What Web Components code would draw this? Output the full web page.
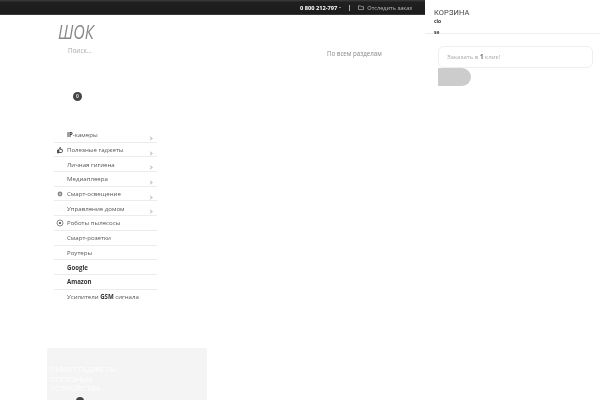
<!doctype html>
<html>
<head>
<meta charset="utf-8">
<style>
  html,body{margin:0;height:400px;overflow:hidden;background:#fff;font-family:"Open Sans",sans-serif;color:#444;}
  body{display:flex;}
  /* own layers with no background: keeps the text antialiasing grey like the reference */
  #page{display:flex;flex-direction:column;width:425px;height:400px;flex:none;will-change:transform;}
</style>
</head>
<body>
<div id="page">
  <top-bar></top-bar>
  <site-header></site-header>
  <side-menu>
    <menu-row arrow><b>IP</b>-камеры</menu-row>
    <menu-row arrow icon="thumb">Полезные гаджеты</menu-row>
    <menu-row arrow>Личная гигиена</menu-row>
    <menu-row arrow>Медиаплеера</menu-row>
    <menu-row arrow icon="gear">Смарт-освещение</menu-row>
    <menu-row arrow>Управление домом</menu-row>
    <menu-row icon="robot">Роботы пылесосы</menu-row>
    <menu-row>Смарт-розетки</menu-row>
    <menu-row>Роутеры</menu-row>
    <menu-row><b>Google</b></menu-row>
    <menu-row><b>Amazon</b></menu-row>
    <menu-row last>Усилители <b>GSM</b> сигнала</menu-row>
  </side-menu>
  <promo-card>СМАРТ-ГАДЖЕТЫ<br>ПОЛЕЗНЫЕ<br>УСТРОЙСТВА</promo-card>
</div>
<cart-panel></cart-panel>

<script>
function shadow(el, html){
  el.attachShadow({mode:'open'}).innerHTML = html;
}

class TopBar extends HTMLElement {
  connectedCallback(){
    shadow(this, `<style>
      :host{display:flex;justify-content:flex-end;align-items:center;box-sizing:border-box;height:15px;
        background:linear-gradient(#3a3a3a 0,#333 1px,#202020 2px,#1c1c1c 14px,#555 15px);color:#bbb;font-size:5.600px;padding-right:13px;flex:none;}
      b{color:#fff;font-weight:700;font-size:5.700px;}
      .caret{width:0;height:0;border:1.500px solid transparent;border-top-color:#ddd;border-bottom:0;margin-left:2px;}
      .sep{width:1px;height:6px;background:#aaa;margin:0 8px 0 8px;}
      svg{margin-right:3px;}
    </style>
    <b>0 800 212-797</b><span class="caret"></span><span class="sep"></span>
    <svg width="6" height="5" viewBox="0 0 7 6" fill="none" stroke="#bbb" stroke-width=".8"><path d="M.5 1h2.500l.7 1h2.800v3.500h-6z"/></svg>
    <span>Отследить заказ</span>`);
  }
}
customElements.define('top-bar', TopBar);

class SiteHeader extends HTMLElement {
  connectedCallback(){
    shadow(this, `<style>
      :host{display:block;position:relative;height:113px;flex:none;padding-left:58px;box-sizing:border-box;}
      .logo{font:italic 400 20px/22px "Open Sans",sans-serif;color:#888;margin-top:6px;height:22px;transform:scaleX(.8);transform-origin:left;}
      .search{font-size:6.300px;line-height:10px;color:#aaa;margin:3px 0 0 10px;}
      .scope{position:absolute;left:327px;top:34px;font-size:6.200px;line-height:10px;color:#888;}
      .badge{position:absolute;left:73px;top:77px;width:9px;height:9px;border-radius:50%;background:#444;color:#ddd;font-size:5px;font-weight:700;line-height:9px;text-align:center;}
    </style>
    <div class="logo">ШОК</div>
    <div class="search">Поиск...</div>
    <div class="scope">По всем разделам</div>
    <div class="badge">0</div>`);
  }
}
customElements.define('site-header', SiteHeader);

class SideMenu extends HTMLElement {
  connectedCallback(){
    shadow(this, `<style>
      :host{display:block;width:103px;margin-left:54px;flex:none;}
    </style><slot></slot>`);
  }
}
customElements.define('side-menu', SideMenu);

const ICONS = {
  thumb:'<path d="M1.500 4h1.200v3h-1.200zM2.700 4l1.300-2.600c.7 0 .9.500.7 1.100l-.3 1.100h1.700c.4 0 .6.300.5.700l-.5 1.900c-.1.300-.3.300-.5.300h-2.900z" fill="none" stroke="#333" stroke-width=".8"/>',
  gear:'<circle cx="4" cy="4" r="2.400" fill="#888"/><circle cx="4" cy="4" r="1" fill="#ccc"/>',
  robot:'<circle cx="4" cy="4" r="3" fill="none" stroke="#555" stroke-width=".7"/><circle cx="4" cy="4" r="1.100" fill="#444"/>'
};

class MenuRow extends HTMLElement {
  connectedCallback(){
    const icon = this.getAttribute('icon');
    shadow(this, `<style>
      :host{display:flex;align-items:center;position:relative;box-sizing:border-box;height:14.7px;padding-left:13px;
        border-bottom:1px solid #ececec;font-size:6.100px;color:#555;}
      :host([last]){border-bottom:0;}
      ::slotted(b){color:#333;}
      svg{position:absolute;left:2px;top:3px;}
      .arrow{position:absolute;right:5px;top:9px;width:2px;height:2px;border:solid #bbb;border-width:.6px .6px 0 0;transform:rotate(45deg);}
    </style>
    ${icon ? `<svg width="8" height="8" viewBox="0 0 8 8">${ICONS[icon]}</svg>` : ''}
    <span><slot></slot></span>
    ${this.hasAttribute('arrow') ? '<i class="arrow"></i>' : ''}`);
  }
}
customElements.define('menu-row', MenuRow);

class PromoCard extends HTMLElement {
  connectedCallback(){
    shadow(this, `<style>
      :host{display:block;position:relative;box-sizing:border-box;width:160px;height:60px;margin:44px 0 0 47px;flex:none;
        background:#f4f4f4;border-radius:2px;padding:17px 0 0 3px;color:#fff;font:300 8px/9.500px Roboto,sans-serif;}
      .dot{position:absolute;left:29px;top:49px;width:8px;height:8px;border-radius:50%;background:#444;}
    </style><slot></slot><span class="dot"></span>`);
  }
}
customElements.define('promo-card', PromoCard);

class CartPanel extends HTMLElement {
  connectedCallback(){
    shadow(this, `<style>
      :host{display:block;flex:none;width:175px;height:400px;will-change:transform;}
      .head{box-sizing:border-box;height:34px;border-bottom:1px solid #eee;padding:8px 0 0 9px;}
      h3{margin:0;font:400 7.500px/10px Roboto,sans-serif;color:#444;letter-spacing:.1px;}
      .close{font-size:5px;font-weight:700;line-height:11px;color:#333;width:9px;word-break:break-all;margin-top:-2px;}
      .field{margin:12px 0 0 13px;width:155px;height:22px;box-sizing:border-box;border:1px solid #eee;border-radius:6px;
        padding-left:8px;font-size:6.100px;line-height:20px;color:#aaa;}
      .field b{color:#666;}
      .btn{margin:0 0 0 13px;width:33px;height:18px;background:#ccc;border-radius:0 9px 9px 0;}
    </style>
    <div class="head"><h3>КОРЗИНА</h3><div class="close">clo se</div></div>
    <div class="field">Заказать в <b>1</b> клик!</div>
    <div class="btn"></div>`);
  }
}
customElements.define('cart-panel', CartPanel);
</script>
</body>
</html>
